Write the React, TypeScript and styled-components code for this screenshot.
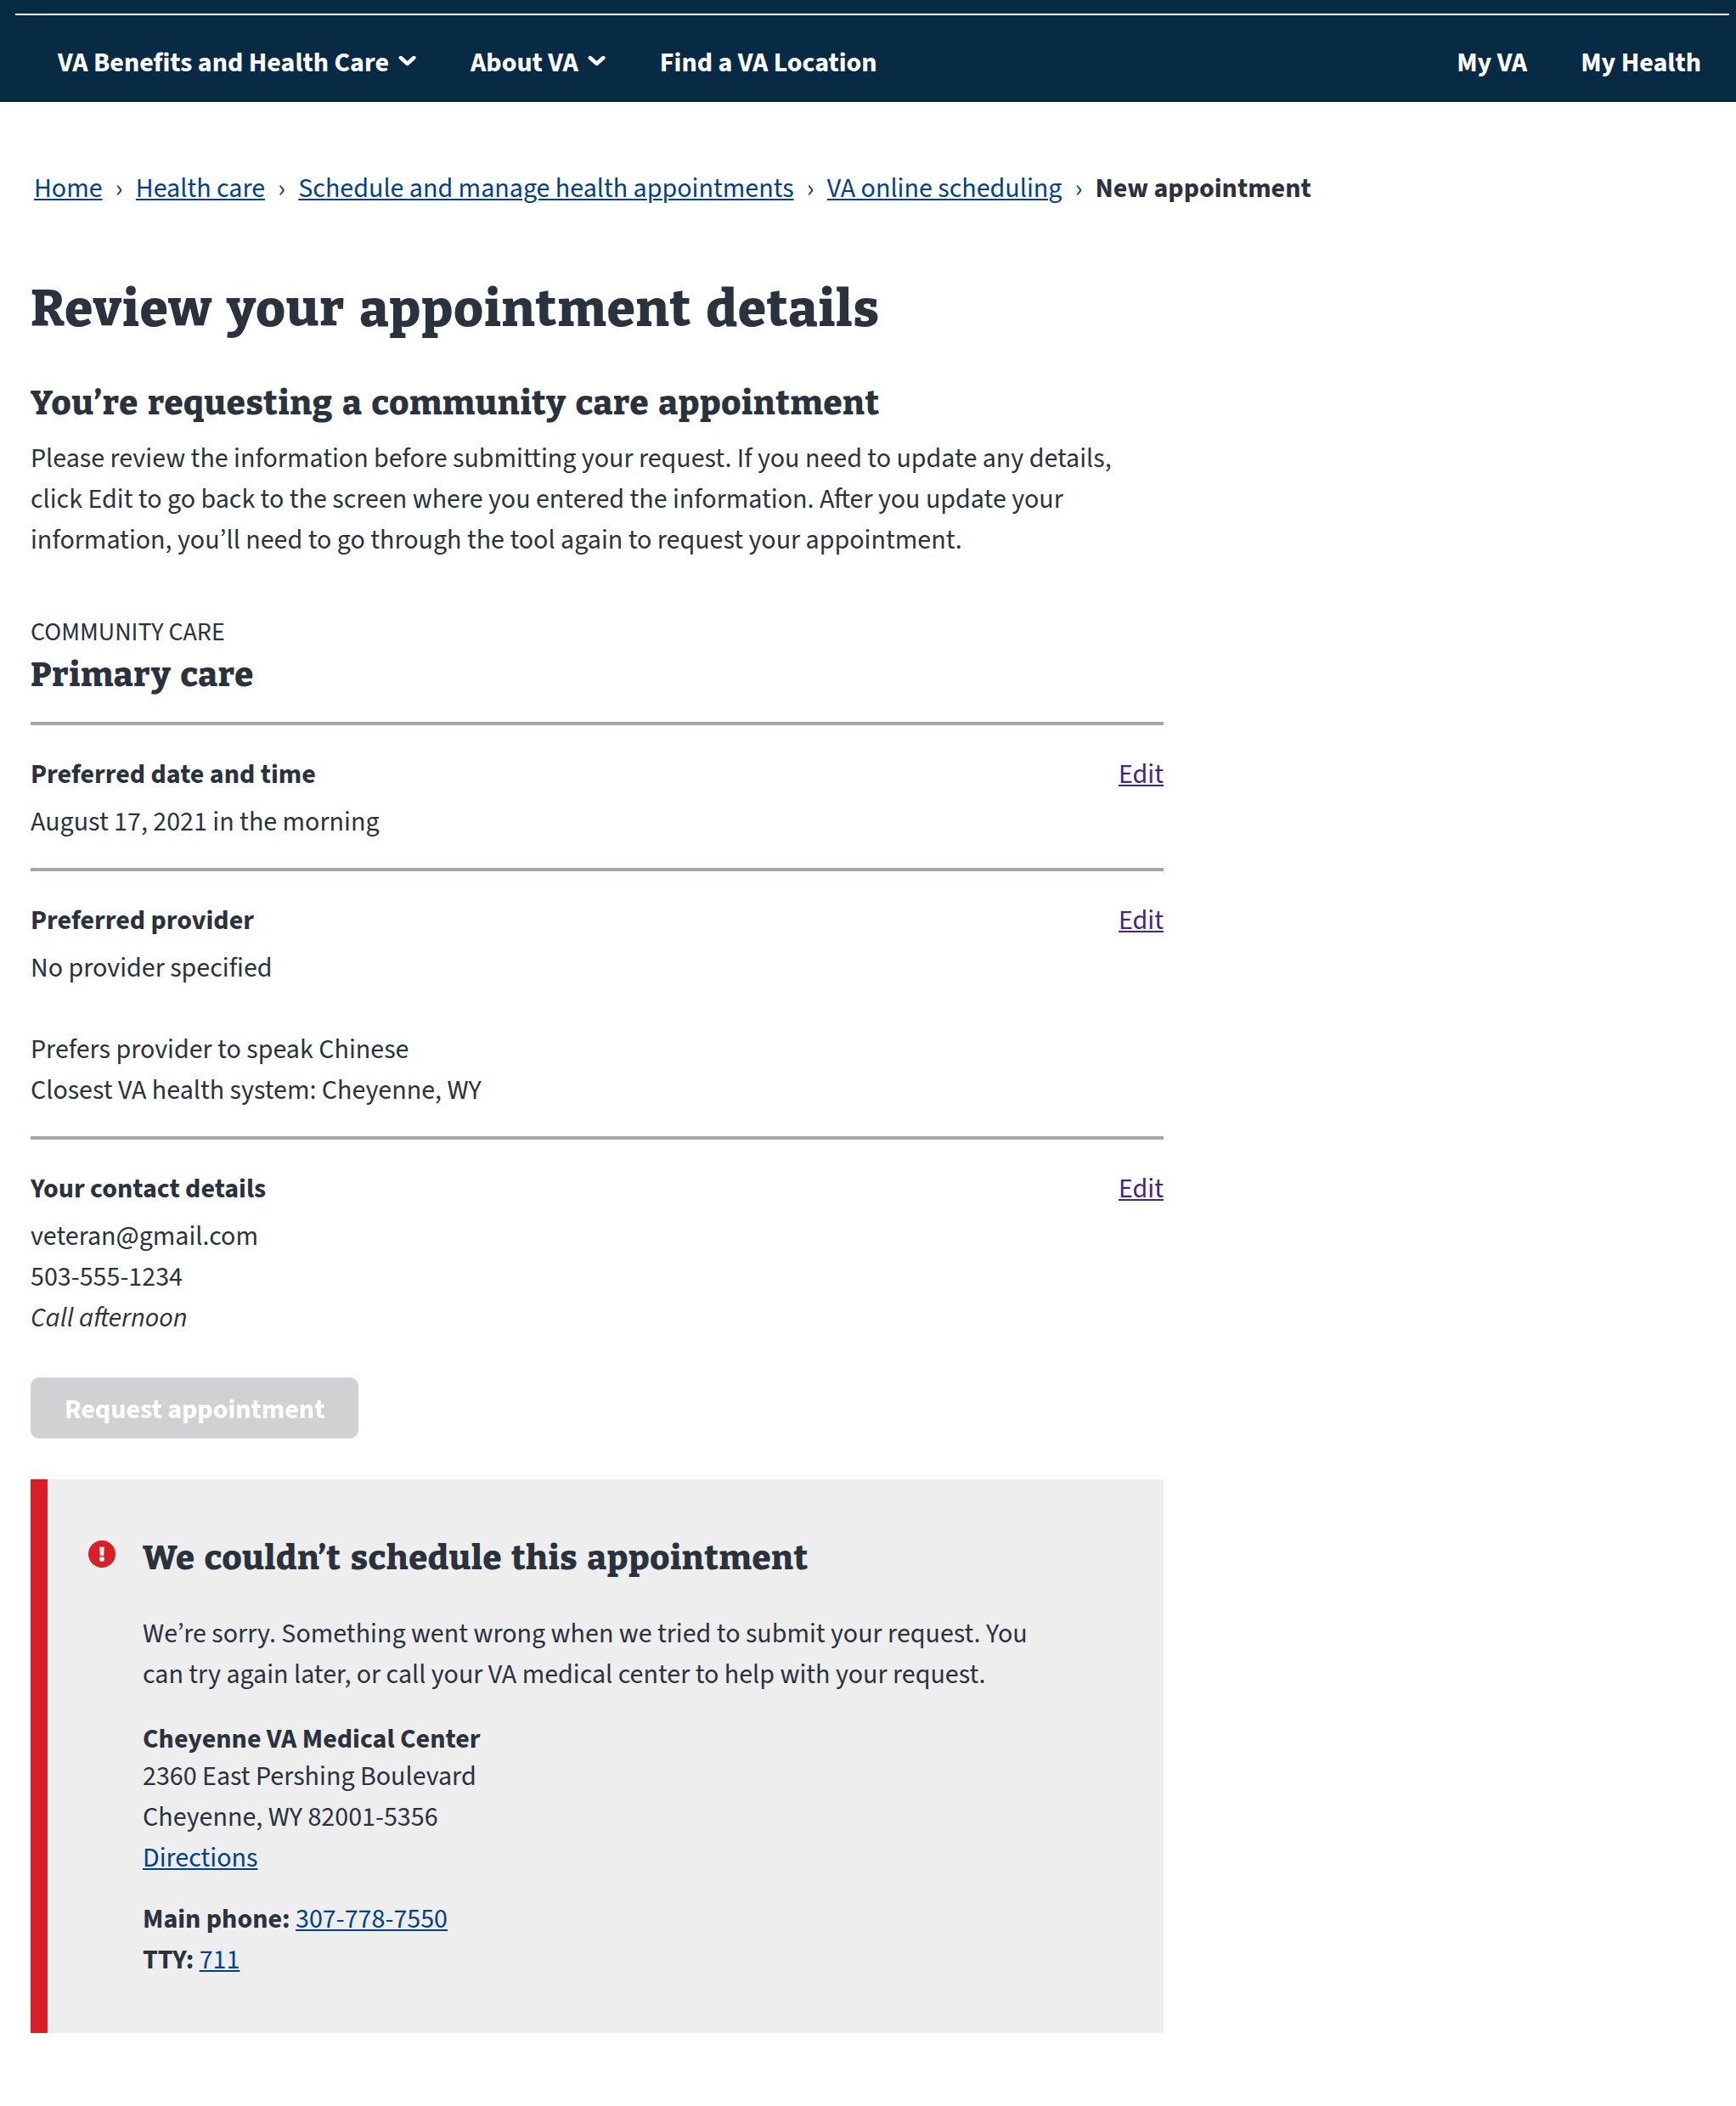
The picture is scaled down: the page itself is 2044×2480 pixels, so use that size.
import React from 'react';
import styled, { createGlobalStyle } from 'styled-components';

const sans = '"Source Sans 3", "Source Sans Pro", "Noto Sans", "Open Sans", sans-serif';
const slab = 'Bitter, "DejaVu Serif Condensed", "DejaVu Serif", serif';

const color = {
  navy: '#072a45',
  text: '#2a333d',
  link: '#00428a',
  visited: '#482382',
  rule: '#a3a7ab',
  disabled: '#d0d1d3',
  error: '#d81f27',
  panel: '#eeeeee',
};

const GlobalStyle = createGlobalStyle`
  *, *::before, *::after { box-sizing: border-box; }
  body {
    margin: 0;
    background: #fff;
    color: ${color.text};
    font: 400 32px/48px ${sans};
  }
  h1, h2, h3, h4, p { margin: 0; }
`;

const Header = styled.header`
  height: 120px;
  padding: 16px 8px 0 18px;
  background: ${color.navy};
  border-bottom: 2px solid #05233d;
  color: #fff;
`;

const NavBar = styled.nav`
  display: flex;
  justify-content: space-between;
  padding: 32px 33px 0 50px;
  border-top: 2px solid #fff;
  font-weight: 700;
`;

const NavGroup = styled.div`
  display: flex;
  gap: 63px;
`;

const NavItem = styled.a`
  display: flex;
  gap: 11px;
  white-space: nowrap;
`;

const ChevronIcon = styled.svg`
  width: 22px;
  height: 14px;
  margin-top: 15px;
`;

const Link = styled.a<{ $visited?: boolean }>`
  color: ${p => (p.$visited ? color.visited : color.link)};
  text-decoration: underline;
  text-decoration-thickness: 2px;
  text-underline-offset: 2px;
`;

const Breadcrumbs = styled.nav`
  display: flex;
  padding: 78px 40px 0;
  white-space: nowrap;
`;

const Separator = styled.span`
  width: 39.2px;
  color: ${color.link};
  text-align: center;
`;

const Content = styled.main`
  width: 1370px;
  padding: 82px 0 86px 36px;
`;

const PageTitle = styled.h1`
  font: 800 60px/72px ${slab};
  letter-spacing: 1.05px;
  word-spacing: 5.7px;
  white-space: nowrap;
`;

const Heading = styled.h2`
  font: 800 40px/48px ${slab};
  letter-spacing: 0.68px;
  word-spacing: 3.6px;
  white-space: nowrap;
`;

const Intro = styled.section`
  display: flex;
  flex-direction: column;
  gap: 17px;
  margin-top: 51px;
`;

const CareType = styled.section`
  display: flex;
  flex-direction: column;
  gap: 4px;
  margin-top: 63px;
  padding-bottom: 31px;
`;

const Eyebrow = styled.p`
  font-size: 30px;
  line-height: 44px;
  text-transform: uppercase;
`;

const Section = styled.section<{ $last?: boolean }>`
  padding: 34px 0 ${p => (p.$last ? 46 : 30)}px;
  border-top: 4px solid ${color.rule};
`;

const SectionHead = styled.div`
  display: flex;
  justify-content: space-between;
  margin-bottom: 8px;
`;

const SectionTitle = styled.h3`
  font: inherit;
  font-weight: 700;
`;

const Line = styled.p`
  min-height: 48px;
`;

const SubmitButton = styled.button`
  display: block;
  height: 72px;
  padding: 14px 40px 10px;
  border: 0;
  border-radius: 10px;
  background: ${color.disabled};
  color: #fff;
  font: 700 32px/48px ${sans};
`;

const Alert = styled.section`
  display: flex;
  gap: 32px;
  margin-top: 48px;
  padding: 69px 64px 62px 48px;
  border-left: 20px solid ${color.error};
  background: ${color.panel};
`;

const ErrorIcon = styled.svg`
  flex: none;
  width: 32px;
  height: 32px;
  margin-top: 3px;
`;

const AlertBody = styled.div`
  width: 1080px;
`;

const AlertText = styled.p`
  margin: 41px 0 32px;
`;

const FacilityName = styled.h4`
  font: inherit;
  font-weight: 700;
  line-height: 40px;
`;

const Phones = styled.div`
  margin-top: 24px;
`;

const Chevron = () => (
  <ChevronIcon viewBox="0 0 22 14" aria-hidden="true">
    <path
      d="M2.8 3L10.6 10L18.4 3"
      fill="none"
      stroke="#fff"
      strokeWidth="4.4"
      strokeLinecap="round"
      strokeLinejoin="round"
    />
  </ChevronIcon>
);

const trail = ['Home', 'Health care', 'Schedule and manage health appointments', 'VA online scheduling'];

type DetailProps = { title: string; last?: boolean; children: React.ReactNode };

const Detail = ({ title, last, children }: DetailProps) => (
  <Section $last={last}>
    <SectionHead>
      <SectionTitle>{title}</SectionTitle>
      <Link $visited>Edit</Link>
    </SectionHead>
    {children}
  </Section>
);

export default function App() {
  return (
    <>
      <GlobalStyle />
      <Header>
        <NavBar>
          <NavGroup>
            <NavItem>VA Benefits and Health Care<Chevron /></NavItem>
            <NavItem>About VA<Chevron /></NavItem>
            <NavItem>Find a VA Location</NavItem>
          </NavGroup>
          <NavGroup>
            <NavItem>My VA</NavItem>
            <NavItem>My Health</NavItem>
          </NavGroup>
        </NavBar>
      </Header>
      <Breadcrumbs>
        {trail.map(label => (
          <React.Fragment key={label}>
            <Link>{label}</Link>
            <Separator>›</Separator>
          </React.Fragment>
        ))}
        <strong>New appointment</strong>
      </Breadcrumbs>
      <Content>
        <PageTitle>Review your appointment details</PageTitle>
        <Intro>
          <Heading>You’re requesting a community care appointment</Heading>
          <p>
            Please review the information before submitting your request. If you need to update any
            details, click Edit to go back to the screen where you entered the information. After you
            update your information, you’ll need to go through the tool again to request your
            appointment.
          </p>
        </Intro>
        <CareType>
          <Eyebrow>Community care</Eyebrow>
          <Heading>Primary care</Heading>
        </CareType>
        <Detail title="Preferred date and time">
          <Line>August 17, 2021 in the morning</Line>
        </Detail>
        <Detail title="Preferred provider">
          <Line>No provider specified</Line>
          <Line />
          <Line>Prefers provider to speak Chinese</Line>
          <Line>Closest VA health system: Cheyenne, WY</Line>
        </Detail>
        <Detail title="Your contact details" last>
          <Line>veteran@gmail.com</Line>
          <Line>503-555-1234</Line>
          <Line><em>Call afternoon</em></Line>
        </Detail>
        <SubmitButton disabled>Request appointment</SubmitButton>
        <Alert>
          <ErrorIcon viewBox="0 0 32 32" aria-hidden="true">
            <circle cx="16" cy="16" r="16" fill={color.error} />
            <path d="M13.2 7.8h5.6l-.6 10.2h-4.4z" fill={color.panel} />
            <circle cx="16" cy="22" r="3" fill={color.panel} />
          </ErrorIcon>
          <AlertBody>
            <Heading>We couldn’t schedule this appointment</Heading>
            <AlertText>
              We’re sorry. Something went wrong when we tried to submit your request. You can try again
              later, or call your VA medical center to help with your request.
            </AlertText>
            <FacilityName>Cheyenne VA Medical Center</FacilityName>
            <Line>2360 East Pershing Boulevard</Line>
            <Line>Cheyenne, WY 82001-5356</Line>
            <Line><Link>Directions</Link></Line>
            <Phones>
              <Line><strong>Main phone:</strong> <Link>307-778-7550</Link></Line>
              <Line><strong>TTY:</strong> <Link>711</Link></Line>
            </Phones>
          </AlertBody>
        </Alert>
      </Content>
    </>
  );
}
